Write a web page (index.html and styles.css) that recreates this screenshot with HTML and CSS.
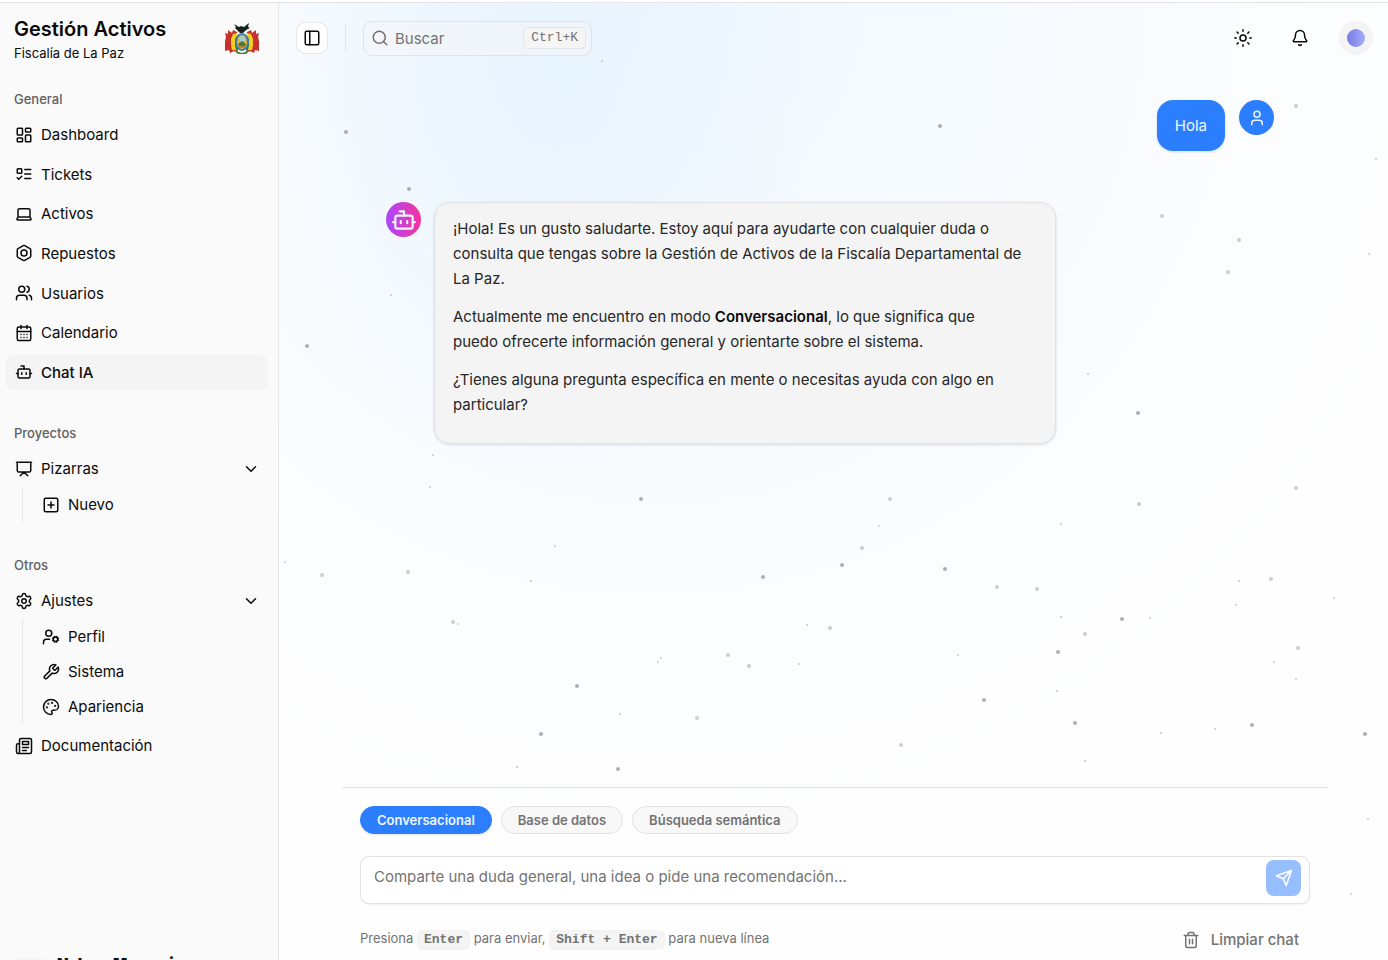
FILE: index.html
```html
<!DOCTYPE html>
<html lang="es">
  <head>
    <meta charset="UTF-8" />
    <meta name="viewport" content="width=device-width, initial-scale=1.0" />
    <title>Gestión Activos - Chat IA</title>
    <link rel="stylesheet" href="styles.css" />
  </head>
  <body>
    <div class="app">
      <aside class="sidebar">
        <div class="brand">
          <div>
            <h1 class="brand-title">Gestión Activos</h1>
            <p class="brand-subtitle">Fiscalía de La Paz</p>
          </div>
          <svg class="brand-logo" viewBox="0 0 36 34" role="img" aria-label="Escudo de Bolivia">
            <path fill="#c9302a" d="M13 10 9 8 8 11 4 8 4 12 1 11 2 15 1 19 1 24 1 29 5 28 6 31 10 29 14 31zM23 10l4-2 1 3 4-3 0 4 3-1-1 4 1 4 0 5 0 5-4-1-1 3-4-2-4 2z" />
            <path fill="#f2cf24" d="M13 11 9 12 7 17 7 23 8 28 11 28 14 30zM23 11l4 1 2 5 0 6-1 5-3 0-3 2z" />
            <path fill="#2f7a3a" d="M13 14 11 17 11 23 12 28 14 30zM23 14l2 3 0 6-1 5-2 2z" />
            <path fill="#16201c" d="M10 2 15 5 17 4 20 5 25 1 24 5 26 6 22 8 19 11 16 11 13 8 11 6 12 5z" />
            <ellipse cx="18" cy="20" rx="7" ry="9" fill="#3a7ca8" />
            <ellipse cx="18" cy="20" rx="5" ry="7" fill="#e3b53c" />
            <ellipse cx="18" cy="17" rx="3" ry="3" fill="#a5cbd8" />
            <path fill="#4c753c" d="M14 22 18 19 22 22 21 24 15 24zM11 29l7 2 7-2-3 3h-8z" />
            <path fill="none" stroke="#9b5c2d" d="M15 25h6" />
          </svg>
        </div>

        <nav class="nav">
          <section class="nav-group">
            <h2 class="nav-label">General</h2>
            <div class="nav-list general">
              <a class="nav-item" href="#dashboard">
                <svg class="icon" viewBox="0 0 24 24"><rect width="7" height="9" x="3" y="3" rx="1" /><rect width="7" height="5" x="14" y="3" rx="1" /><rect width="7" height="9" x="14" y="12" rx="1" /><rect width="7" height="5" x="3" y="16" rx="1" /></svg>
                <span>Dashboard</span>
              </a>
              <a class="nav-item" href="#tickets">
                <svg class="icon" viewBox="0 0 24 24"><rect x="3" y="5" width="6" height="6" rx="1" /><path d="m3 17 2 2 4-4M13 6h8M13 12h8M13 18h8" /></svg>
                <span>Tickets</span>
              </a>
              <a class="nav-item" href="#activos">
                <svg class="icon" viewBox="0 0 24 24"><path d="M18 5a2 2 0 0 1 2 2v8.526a2 2 0 0 0 .212.897l1.068 2.127a1 1 0 0 1-.9 1.45H3.62a1 1 0 0 1-.9-1.45l1.068-2.127A2 2 0 0 0 4 15.526V7a2 2 0 0 1 2-2zM20.054 15.987H3.946" /></svg>
                <span>Activos</span>
              </a>
              <a class="nav-item" href="#repuestos">
                <svg class="icon" viewBox="0 0 24 24"><path d="M21 16V8a2 2 0 0 0-1-1.73l-7-4a2 2 0 0 0-2 0l-7 4A2 2 0 0 0 3 8v8a2 2 0 0 0 1 1.73l7 4a2 2 0 0 0 2 0l7-4A2 2 0 0 0 21 16z" /><circle cx="12" cy="12" r="4" /></svg>
                <span>Repuestos</span>
              </a>
              <a class="nav-item" href="#usuarios">
                <svg class="icon" viewBox="0 0 24 24"><path d="M16 21v-2a4 4 0 0 0-4-4H6a4 4 0 0 0-4 4v2" /><circle cx="9" cy="7" r="4" /><path d="M22 21v-2a4 4 0 0 0-3-3.87M16 3.13a4 4 0 0 1 0 7.75" /></svg>
                <span>Usuarios</span>
              </a>
              <a class="nav-item" href="#calendario">
                <svg class="icon" viewBox="0 0 24 24"><path d="M8 2v4M16 2v4" /><rect width="18" height="18" x="3" y="4" rx="2" /><path d="M3 10h18M8 14h.01M12 14h.01M16 14h.01M8 18h.01M12 18h.01M16 18h.01" /></svg>
                <span>Calendario</span>
              </a>
              <a class="nav-item active" href="#chat">
                <svg class="icon" viewBox="0 0 24 24"><path d="M12 8V4H8" /><rect width="16" height="12" x="4" y="8" rx="2" /><path d="M2 14h2M20 14h2M15 13v2M9 13v2" /></svg>
                <span>Chat IA</span>
              </a>
            </div>
          </section>

          <section class="nav-group">
            <h2 class="nav-label">Proyectos</h2>
            <button class="nav-item" type="button">
              <svg class="icon" viewBox="0 0 24 24"><path d="M2 3h20M21 3v11a2 2 0 0 1-2 2H5a2 2 0 0 1-2-2V3M7 21l5-5 5 5" /></svg>
              <span>Pizarras</span>
              <svg class="icon chevron" viewBox="0 0 24 24"><path d="m6 9 6 6 6-6" /></svg>
            </button>
            <div class="nav-sub">
              <a class="nav-item" href="#nuevo">
                <svg class="icon" viewBox="0 0 24 24"><rect width="18" height="18" x="3" y="3" rx="2" /><path d="M8 12h8M12 8v8" /></svg>
                <span>Nuevo</span>
              </a>
            </div>
          </section>

          <section class="nav-group">
            <h2 class="nav-label">Otros</h2>
            <button class="nav-item" type="button">
              <svg class="icon" viewBox="0 0 24 24"><path d="M9.671 4.136a2.34 2.34 0 0 1 4.659 0 2.34 2.34 0 0 0 3.319 1.915 2.34 2.34 0 0 1 2.33 4.033 2.34 2.34 0 0 0 0 3.831 2.34 2.34 0 0 1-2.33 4.033 2.34 2.34 0 0 0-3.319 1.915 2.34 2.34 0 0 1-4.659 0 2.34 2.34 0 0 0-3.32-1.915 2.34 2.34 0 0 1-2.33-4.033 2.34 2.34 0 0 0 0-3.831A2.34 2.34 0 0 1 6.35 6.051a2.34 2.34 0 0 0 3.319-1.915" /><circle cx="12" cy="12" r="3" /></svg>
              <span>Ajustes</span>
              <svg class="icon chevron" viewBox="0 0 24 24"><path d="m6 9 6 6 6-6" /></svg>
            </button>
            <div class="nav-sub">
              <a class="nav-item" href="#perfil">
                <svg class="icon" viewBox="0 0 24 24"><circle cx="18" cy="15" r="3" /><circle cx="9" cy="7" r="4" /><path d="M10 15H6a4 4 0 0 0-4 4v2M21.7 16.4l-.9-.3M15.2 13.9l-.9-.3M16.6 18.7l.3-.9M19.1 12.2l.3-.9M19.6 18.7l-.4-1M16.8 12.3l-.4-1M14.3 16.6l1-.4M20.7 13.8l1-.4" /></svg>
                <span>Perfil</span>
              </a>
              <a class="nav-item" href="#sistema">
                <svg class="icon" viewBox="0 0 24 24"><path d="M14.7 6.3a1 1 0 0 0 0 1.4l1.6 1.6a1 1 0 0 0 1.4 0l3.77-3.77a6 6 0 0 1-7.94 7.94l-6.91 6.91a2.12 2.12 0 0 1-3-3l6.91-6.91a6 6 0 0 1 7.94-7.94l-3.76 3.76z" /></svg>
                <span>Sistema</span>
              </a>
              <a class="nav-item" href="#apariencia">
                <svg class="icon" viewBox="0 0 24 24"><circle cx="13.5" cy="6.5" r=".5" /><circle cx="17.5" cy="10.5" r=".5" /><circle cx="8.5" cy="7.5" r=".5" /><circle cx="6.5" cy="12.5" r=".5" /><path d="M12 2C6.5 2 2 6.5 2 12s4.500 10 10 10c.926 0 1.648-.746 1.648-1.688 0-.437-.18-.835-.437-1.125-.29-.289-.438-.652-.438-1.125a1.640 1.640 0 0 1 1.668-1.668h1.996c3.051 0 5.555-2.503 5.555-5.554C21.965 6.012 17.461 2 12 2z" /></svg>
                <span>Apariencia</span>
              </a>
            </div>
            <a class="nav-item" href="#documentacion">
              <svg class="icon" viewBox="0 0 24 24"><path d="M4 22h16a2 2 0 0 0 2-2V4a2 2 0 0 0-2-2H8a2 2 0 0 0-2 2v16a2 2 0 0 1-2 2Zm0 0a2 2 0 0 1-2-2v-9c0-1.100.9-2 2-2h2M18 14h-8M15 18h-5M10 6h8v4h-8z" /></svg>
              <span>Documentación</span>
            </a>
          </section>
        </nav>

        <div class="user-card">
          <span class="user-photo"></span>
          <strong>Nelson Mamani</strong>
        </div>
      </aside>

      <main class="main">
        <svg class="particles" viewBox="0 0 1109 957" preserveAspectRatio="xMidYMin slice" aria-hidden="true">
          <g opacity=".75">
            <circle cx="67" cy="129" r="2" /><circle cx="130" cy="186" r="2" /><circle cx="661" cy="123" r="2" />
            <circle cx="362" cy="496" r="2" /><circle cx="859" cy="410" r="2" /><circle cx="484" cy="574" r="2" />
            <circle cx="666" cy="566" r="2" /><circle cx="843" cy="616" r="2" /><circle cx="705" cy="697" r="2" />
            <circle cx="1086" cy="731" r="2" /><circle cx="262" cy="731" r="2" /><circle cx="339" cy="766" r="2" />
            <circle cx="779" cy="649" r="2" /><circle cx="796" cy="720" r="2" /><circle cx="973" cy="722" r="2" />
            <circle cx="298" cy="683" r="2" /><circle cx="563" cy="562" r="2" /><circle cx="28" cy="343" r="2" />
          </g>
          <g opacity=".45">
            <circle cx="883" cy="213" r="2" /><circle cx="960" cy="237" r="2" /><circle cx="949" cy="269" r="2" />
            <circle cx="611" cy="496" r="2" /><circle cx="583" cy="545" r="2" /><circle cx="129" cy="569" r="2" />
            <circle cx="992" cy="576" r="2" /><circle cx="806" cy="631" r="2" /><circle cx="470" cy="663" r="2" />
            <circle cx="449" cy="652" r="2" /><circle cx="418" cy="715" r="2" /><circle cx="622" cy="742" r="2" />
            <circle cx="1019" cy="645" r="2" /><circle cx="758" cy="586" r="2" /><circle cx="718" cy="584" r="2" />
            <circle cx="860" cy="501" r="2" /><circle cx="1017" cy="485" r="2" /><circle cx="1017" cy="103" r="2" />
            <circle cx="551" cy="625" r="2" /><circle cx="174" cy="619" r="2" /><circle cx="43" cy="572" r="2" />
          </g>
          <g opacity=".5">
            <circle cx="600" cy="523" r="1" /><circle cx="112" cy="292" r="1" /><circle cx="276" cy="543" r="1" />
            <circle cx="252" cy="578" r="1" /><circle cx="379" cy="659" r="1" /><circle cx="382" cy="655" r="1" />
            <circle cx="179" cy="621" r="1" /><circle cx="957" cy="602" r="1" /><circle cx="960" cy="578" r="1" />
            <circle cx="782" cy="614" r="1" /><circle cx="871" cy="615" r="1" /><circle cx="679" cy="652" r="1" />
            <circle cx="1072" cy="891" r="1" /><circle cx="1089" cy="816" r="1" /><circle cx="882" cy="730" r="1" />
            <circle cx="936" cy="726" r="1" /><circle cx="778" cy="688" r="1" /><circle cx="1055" cy="595" r="1" />
            <circle cx="341" cy="711" r="1" /><circle cx="520" cy="661" r="1" /><circle cx="6" cy="559" r="1" />
            <circle cx="1017" cy="676" r="1" /><circle cx="995" cy="659" r="1" /><circle cx="806" cy="758" r="1" />
            <circle cx="809" cy="371" r="1" /><circle cx="1097" cy="156" r="1" /><circle cx="1090" cy="251" r="1" />
            <circle cx="151" cy="484" r="1" /><circle cx="154" cy="452" r="1" /><circle cx="782" cy="521" r="1" />
            <circle cx="323" cy="58" r="1" /><circle cx="528" cy="622" r="1" /><circle cx="238" cy="764" r="1" />
          </g>
        </svg>

        <header class="topbar">
          <button class="toggle" type="button" aria-label="Alternar menú">
            <svg class="icon" viewBox="0 0 24 24"><rect width="18" height="18" x="3" y="3" rx="2" /><path d="M9 3v18" /></svg>
          </button>
          <span class="divider"></span>
          <label class="search">
            <svg class="icon" viewBox="0 0 24 24"><circle cx="11" cy="11" r="8" /><path d="m21 21-4.300-4.300" /></svg>
            <input type="text" placeholder="Buscar" aria-label="Buscar" />
            <kbd>Ctrl+K</kbd>
          </label>
          <div class="actions">
            <button class="action" type="button" aria-label="Tema">
              <svg class="icon" viewBox="0 0 24 24"><circle cx="12" cy="12" r="4" /><path d="M12 1v2M12 21v2M4.200 4.200l1.400 1.400M18.400 18.400l1.400 1.400M1 12h2M21 12h2M5.600 18.400l-1.400 1.400M19.800 4.200l-1.400 1.400" /></svg>
            </button>
            <button class="action" type="button" aria-label="Notificaciones">
              <svg class="icon" viewBox="0 0 24 24"><path d="M10.268 21a2 2 0 0 0 3.464 0M3.262 15.326A1 1 0 0 0 4 17h16a1 1 0 0 0 .74-1.673C19.410 13.956 18 12.499 18 8A6 6 0 0 0 6 8c0 4.499-1.411 5.956-2.738 7.326" /></svg>
            </button>
            <button class="profile" type="button" aria-label="Cuenta"><span></span></button>
          </div>
        </header>

        <div class="chat">
          <div class="messages">
            <div class="message user">
              <div class="bubble">Hola</div>
              <span class="avatar">
                <svg class="icon" viewBox="0 0 24 24"><path d="M19 21v-2a4 4 0 0 0-4-4H9a4 4 0 0 0-4 4v2" /><circle cx="12" cy="7" r="4" /></svg>
              </span>
            </div>
            <div class="message bot">
              <span class="avatar">
                <svg class="icon" viewBox="0 0 24 24"><path d="M12 8V4H8" /><rect width="16" height="12" x="4" y="8" rx="2" /><path d="M2 14h2M20 14h2M15 13v2M9 13v2" /></svg>
              </span>
              <div class="bubble">
                <p>¡Hola! Es un gusto saludarte. Estoy aquí para ayudarte con cualquier duda o consulta que tengas sobre la Gestión de Activos de la Fiscalía Departamental de La Paz.</p>
                <p>Actualmente me encuentro en modo <strong>Conversacional</strong>, lo que significa que<br />puedo ofrecerte información general y orientarte sobre el sistema.</p>
                <p>¿Tienes alguna pregunta específica en mente o necesitas ayuda con algo en particular?</p>
              </div>
            </div>
          </div>

          <form class="composer">
            <div class="modes">
              <button class="mode active" type="button">Conversacional</button>
              <button class="mode" type="button">Base de datos</button>
              <button class="mode" type="button">Búsqueda semántica</button>
            </div>
            <div class="prompt">
              <textarea rows="1" aria-label="Mensaje" placeholder="Comparte una duda general, una idea o pide una recomendación..."></textarea>
              <button class="send" type="button" aria-label="Enviar" disabled>
                <svg class="icon" viewBox="0 0 24 24"><path d="m22 2-7 20-4-9-9-4ZM22 2 11 13" /></svg>
              </button>
            </div>
            <div class="hints">
              <p>Presiona <kbd>Enter</kbd> para enviar, <kbd>Shift + Enter</kbd> para nueva línea</p>
              <button class="clear" type="button">
                <svg class="icon" viewBox="0 0 24 24"><path d="M3 6h18M19 6v14a2 2 0 0 1-2 2H7a2 2 0 0 1-2-2V6M8 6V4a2 2 0 0 1 2-2h4a2 2 0 0 1 2 2v2M10 11v6M14 11v6" /></svg>
                Limpiar chat
              </button>
            </div>
          </form>
        </div>
      </main>
    </div>
  </body>
</html>
```
FILE: styles.css
```css
* {
  margin: 0;
  padding: 0;
  box-sizing: border-box;
}

body {
  height: 100vh;
  padding-top: 2px;
  overflow: hidden;
  background-color: #fff;
  color: #0a0a0a;
  font-family: Inter, "Liberation Sans", sans-serif;
  font-size: 15px;
}

a {
  color: inherit;
  text-decoration: none;
}

button,
input,
textarea {
  border: none;
  background: none;
  color: inherit;
  font: inherit;
}

button {
  cursor: pointer;
}

kbd {
  font-family: "Liberation Mono", monospace;
  font-size: 13px;
}

.icon {
  width: 18px;
  height: 18px;
  flex-shrink: 0;
  fill: none;
  stroke: currentColor;
  stroke-width: 2;
  stroke-linecap: round;
  stroke-linejoin: round;
}

.app {
  display: flex;
  height: 100%;
  border-top: 1px solid #e2e4e8;
}

/* Sidebar */
.sidebar {
  width: 279px;
  height: calc(100vh + 30px);
  flex-shrink: 0;
  display: flex;
  flex-direction: column;
  border-right: 1px solid #e5e5e5;
  background-color: #fafafa;
}

.brand {
  display: flex;
  align-items: center;
  justify-content: space-between;
  padding: 12px 18px 0 14px;
}

.brand-title {
  font-size: 20px;
  font-weight: 600;
  line-height: 28px;
}

.brand-subtitle {
  font-size: 13px;
  line-height: 20px;
}

.brand-logo {
  width: 36px;
  height: 34px;
}

.nav {
  flex: 1;
  padding: 19px 10px 0 6px;
}

.nav-group {
  margin-bottom: 26px;
}

.nav-label {
  padding: 0 8px;
  color: #606060;
  font-size: 13px;
  font-weight: 500;
  line-height: 35px;
}

.nav-list {
  display: flex;
  flex-direction: column;
  justify-content: space-between;
}

.nav-list.general {
  height: 273px;
}

.nav-item {
  width: 100%;
  height: 35px;
  display: flex;
  align-items: center;
  gap: 8px;
  padding: 0 8px 0 9px;
  border-radius: 8px;
  text-align: left;
}

.nav-item:hover,
.nav-item.active {
  background-color: #f4f4f5;
}

.nav-item.active {
  font-weight: 500;
}

.chevron {
  margin-left: auto;
}

.nav-sub {
  margin: 1px 0 4px 16px;
  padding-left: 10px;
  border-left: 1px solid #e5e5e5;
}

.user-card {
  display: flex;
  gap: 8px;
  padding: 0 14px;
  font-weight: 600;
}

.user-photo {
  width: 35px;
  height: 35px;
  margin-top: 4px;
  border-radius: 8px;
  background-color: #f4f4f5;
}

/* Main area */
.main {
  position: relative;
  flex: 1;
  min-width: 0;
  display: flex;
  flex-direction: column;
  background:
    radial-gradient(ellipse 24% 44% at 24% 6%, rgba(222, 239, 255, 0.5), rgba(222, 239, 255, 0)),
    radial-gradient(ellipse 72% 85% at 34% 0%, rgba(238, 247, 255, 0.9), rgba(244, 252, 255, 0)),
    #fefefe;
}

.particles {
  position: absolute;
  inset: 0;
  width: 100%;
  height: 100%;
  fill: #8f969e;
  pointer-events: none;
}

.topbar {
  position: relative;
  height: 70px;
  display: flex;
  align-items: center;
  padding: 0 15px 0 17px;
}

.toggle {
  width: 32px;
  height: 32px;
  display: grid;
  place-items: center;
  border: 1px solid #e5e5e5;
  border-radius: 10px;
  background-color: #fff;
}

.divider {
  width: 1px;
  height: 26px;
  margin: 0 17px;
  background-color: #e0e4e8;
}

.search {
  width: 229px;
  height: 35px;
  display: flex;
  align-items: center;
  gap: 6px;
  padding: 0 5px 0 7px;
  border: 1px solid #dfe4e9;
  border-radius: 9px;
  background-color: rgba(245, 245, 247, 0.5);
  color: #737373;
}

.search input {
  flex: 1;
  min-width: 0;
  outline: none;
}

::placeholder {
  color: #737373;
  opacity: 1;
}

.search kbd {
  padding: 0 7px;
  border: 1px solid #e2e4e6;
  border-radius: 5px;
  background-color: #f5f5f5;
  line-height: 20px;
}

.actions {
  display: flex;
  align-items: center;
  gap: 21px;
  margin-left: auto;
}

.action {
  width: 36px;
  height: 36px;
  display: grid;
  place-items: center;
}

.profile {
  width: 34px;
  height: 34px;
  display: grid;
  place-items: center;
  border-radius: 50%;
  background-color: #f4f4f5;
}

.profile span {
  width: 18px;
  height: 18px;
  border-radius: 50%;
  background: linear-gradient(90deg, #777be5, #a5adfa);
}

.chat {
  position: relative;
  flex: 1;
  min-height: 0;
  display: flex;
  flex-direction: column;
  padding: 0 60px 0 63px;
}

.messages {
  flex: 1;
  display: flex;
  flex-direction: column;
  gap: 51px;
  padding: 27px 54px 0 44px;
}

.message {
  display: flex;
  align-items: flex-start;
  gap: 13px;
}

.message.user {
  justify-content: flex-end;
  gap: 14px;
}

.bubble {
  max-width: 70%;
  padding: 13px 18px;
  border: 1px solid #e2e2e4;
  border-radius: 16px;
  background-color: #f4f4f4;
  box-shadow: 0 1px 3px rgba(0, 0, 0, 0.12);
  color: #262626;
  line-height: 25px;
}

.user .bubble {
  border: none;
  background-color: #2b7fff;
  color: #eff6ff;
}

.bubble p {
  margin-bottom: 13px;
}

.bubble strong {
  color: #0a0a0a;
  font-weight: 600;
}

.avatar {
  width: 35px;
  height: 35px;
  flex-shrink: 0;
  display: grid;
  place-items: center;
  border-radius: 50%;
  background-color: #2b7fff;
  color: #eff6ff;
}

.bot .avatar {
  background: linear-gradient(90deg, #ad46ff, #f6339a);
}

.bot .avatar .icon {
  width: 26px;
  height: 26px;
}

/* Composer */
.composer {
  padding: 18px 18px 3px;
  border-top: 1px solid #e2e2e4;
}

.modes {
  display: flex;
  gap: 9px;
  margin-bottom: 22px;
}

.mode {
  height: 28px;
  padding: 0 16px;
  border: 1px solid #e2e2e4;
  border-radius: 14px;
  background-color: #f8f8f9;
  color: #737373;
  font-size: 13px;
  font-weight: 600;
}

.mode.active {
  border-color: #2b7fff;
  background-color: #2b7fff;
  color: #eff6ff;
  box-shadow: 0 1px 2px rgba(0, 0, 0, 0.1);
}

.prompt {
  height: 48px;
  display: flex;
  align-items: flex-start;
  padding: 3px 8px 3px 13px;
  border: 1px solid #e2e2e4;
  border-radius: 9px;
  background-color: #fff;
  box-shadow: 0 1px 2px rgba(0, 0, 0, 0.06);
}

.prompt textarea {
  flex: 1;
  height: 34px;
  padding: 4px 0;
  outline: none;
  resize: none;
  line-height: 26px;
}

.send {
  width: 35px;
  height: 36px;
  display: grid;
  place-items: center;
  border-radius: 8px;
  background-color: #95bfff;
  color: #fff;
}

.hints {
  display: flex;
  align-items: center;
  justify-content: space-between;
  margin-top: 18px;
  color: #737373;
  font-size: 13px;
}

.hints kbd {
  display: inline-block;
  padding: 0 7px;
  border-radius: 5px;
  background-color: #f4f4f5;
  font-weight: 600;
  line-height: 20px;
}

.clear {
  height: 35px;
  display: flex;
  align-items: center;
  gap: 11px;
  padding: 0 11px;
  font-size: 15px;
  font-weight: 500;
}
```
